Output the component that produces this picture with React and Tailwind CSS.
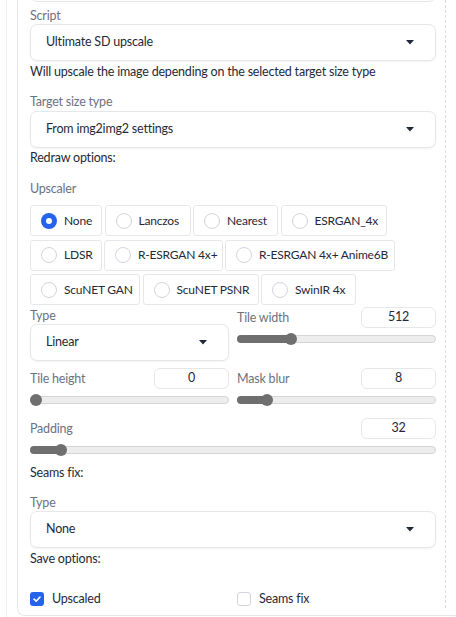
import React from "react";

const font = {
  fontFamily: "Lato, 'Liberation Sans', sans-serif",
  letterSpacing: "-0.2px",
};

function Caret() {
  return (
    <svg width="8" height="5" viewBox="0 0 8 5" className="shrink-0">
      <path d="M0 0 L8 0 L4 4.5 Z" fill="#1f2937" />
    </svg>
  );
}

function Dropdown({ value, className = "" }) {
  return (
    <div
      className={
        "flex h-[37px] items-center justify-between rounded-[7px] border border-[#e5e7eb] bg-white pl-[15px] pr-[21px] text-[12.5px] text-[#1f2937] shadow-[0_1px_2px_rgba(0,0,0,0.05)] " +
        className
      }
    >
      <span>{value}</span>
      <Caret />
    </div>
  );
}

function Label({ children, className = "" }) {
  return (
    <div className={"text-[12.5px] leading-[17px] text-[#6b7280] " + className}>
      {children}
    </div>
  );
}

function Radio({ label, checked, w }) {
  return (
    <div
      className="flex h-[31px] shrink-0 items-center gap-[7px] whitespace-nowrap rounded-[3px] border border-[#e5e7eb] bg-white pl-[10px] text-[12px] text-[#1f2937]"
      style={{ width: w }}
    >
      {checked ? (
        <span className="flex h-[16px] w-[16px] shrink-0 items-center justify-center rounded-full bg-[#2563eb]">
          <span className="h-[6px] w-[6px] rounded-full bg-white" />
        </span>
      ) : (
        <span className="h-[16px] w-[16px] shrink-0 rounded-full border border-[#d1d5db] bg-white" />
      )}
      <span>{label}</span>
    </div>
  );
}

function NumBox({ value, className = "" }) {
  return (
    <div
      className={
        "flex h-[21px] w-[75px] items-center justify-center rounded-[6px] border border-[#e5e7eb] bg-white text-[12.5px] text-[#1f2937] " +
        className
      }
    >
      {value}
    </div>
  );
}

function Slider({ pct }) {
  return (
    <div className="relative mt-[4px] h-[14px]">
      <div className="absolute left-0 right-0 top-[3px] h-[8px] rounded-full border border-[#d4d4d4] bg-[#ededed]" />
      <div
        className="absolute left-0 top-[3px] h-[8px] rounded-l-full bg-[#6f6f6f]"
        style={{ width: pct + "%" }}
      />
      <div
        className="absolute top-[1px] h-[12px] w-[12px] -translate-x-1/2 rounded-full bg-[#6f6f6f]"
        style={{ left: `max(6px, ${pct}%)` }}
      />
    </div>
  );
}

function SliderBlock({ label, value, pct }) {
  return (
    <div>
      <div className="flex h-[21px] items-center justify-between">
        <Label>{label}</Label>
        <NumBox value={value} />
      </div>
      <Slider pct={pct} />
    </div>
  );
}

function Check({ label, checked }) {
  return (
    <div className="flex h-[20px] items-center gap-[8px] text-[12.5px] text-[#1f2937]">
      {checked ? (
        <span className="flex h-[14px] w-[14px] items-center justify-center rounded-[3px] bg-[#2563eb]">
          <svg width="10" height="10" viewBox="0 0 10 10">
            <path d="M2 5.2 L4.2 7.2 L8 3" stroke="white" strokeWidth="1.6" fill="none" strokeLinecap="round" strokeLinejoin="round" />
          </svg>
        </span>
      ) : (
        <span className="h-[14px] w-[14px] rounded-[3px] border border-[#d1d5db] bg-white" />
      )}
      <span>{label}</span>
    </div>
  );
}

function Text({ children, className = "" }) {
  return (
    <div className={"text-[12.5px] leading-[20px] text-[#1f2937] " + className}>
      {children}
    </div>
  );
}

export default function App() {
  return (
    <div className="h-[617px] w-[456px] overflow-hidden bg-white" style={font}>
      <div className="flex h-full pl-[6px]">
        <div className="h-full flex-1 border-l border-[#eceef1] pl-[10px]">
          <div className="flex h-[616px] rounded-bl-[8px] border-b border-l border-[#e5e7eb]">
            <div className="w-[418px] shrink-0 pl-[12px]">
              <div className="w-[406px]">
                <div className="-mt-[35px] h-[37px] rounded-[7px] border border-[#e5e7eb]" />
                <Label className="mt-[5px]">Script</Label>
                <Dropdown value="Ultimate SD upscale" />
                <Text className="mt-[1px]">
                  Will upscale the image depending on the selected target size type
                </Text>
                <Label className="mt-[11px]">Target size type</Label>
                <Dropdown value="From img2img2 settings" className="mt-[1px]" />
                <Text>Redraw options:</Text>
                <Label className="mt-[12px]">Upscaler</Label>
                <div className="mt-[8px] flex flex-col gap-[3.5px]">
                  <div className="flex gap-[2.5px]">
                    <Radio label="None" checked w={72} />
                    <Radio label="Lanczos" w={86} />
                    <Radio label="Nearest" w={85} />
                    <Radio label="ESRGAN_4x" w={106} />
                  </div>
                  <div className="flex gap-[2px]">
                    <Radio label="LDSR" w={72} />
                    <Radio label="R-ESRGAN 4x+" w={119} />
                    <Radio label="R-ESRGAN 4x+ Anime6B" w={170} />
                  </div>
                  <div className="flex gap-[2.5px]">
                    <Radio label="ScuNET GAN" w={110} />
                    <Radio label="ScuNET PSNR" w={116} />
                    <Radio label="SwinIR 4x" w={95} />
                  </div>
                </div>
                <div className="mt-[2px] grid grid-cols-2 gap-x-[8px]">
                  <div>
                    <Label>Type</Label>
                    <Dropdown value="Linear" />
                  </div>
                  <SliderBlock label="Tile width" value="512" pct={27} />
                </div>
                <div className="mt-[7px] grid grid-cols-2 gap-x-[8px]">
                  <SliderBlock label="Tile height" value="0" pct={0} />
                  <SliderBlock label="Mask blur" value="8" pct={15} />
                </div>
                <div className="mt-[11px]">
                  <SliderBlock label="Padding" value="32" pct={7.6} />
                </div>
                <Text className="mt-[6px]">Seams fix:</Text>
                <Label className="mt-[11px]">Type</Label>
                <Dropdown value="None" />
                <Text className="mt-[1px]">Save options:</Text>
                <div className="mt-[20px] grid grid-cols-2 gap-x-[8px]">
                  <Check label="Upscaled" checked />
                  <Check label="Seams fix" />
                </div>
              </div>
            </div>
            <div className="ml-[9px] h-[608px] border-l border-dashed border-[#d9dbe0]" />
          </div>
        </div>
      </div>
    </div>
  );
}
